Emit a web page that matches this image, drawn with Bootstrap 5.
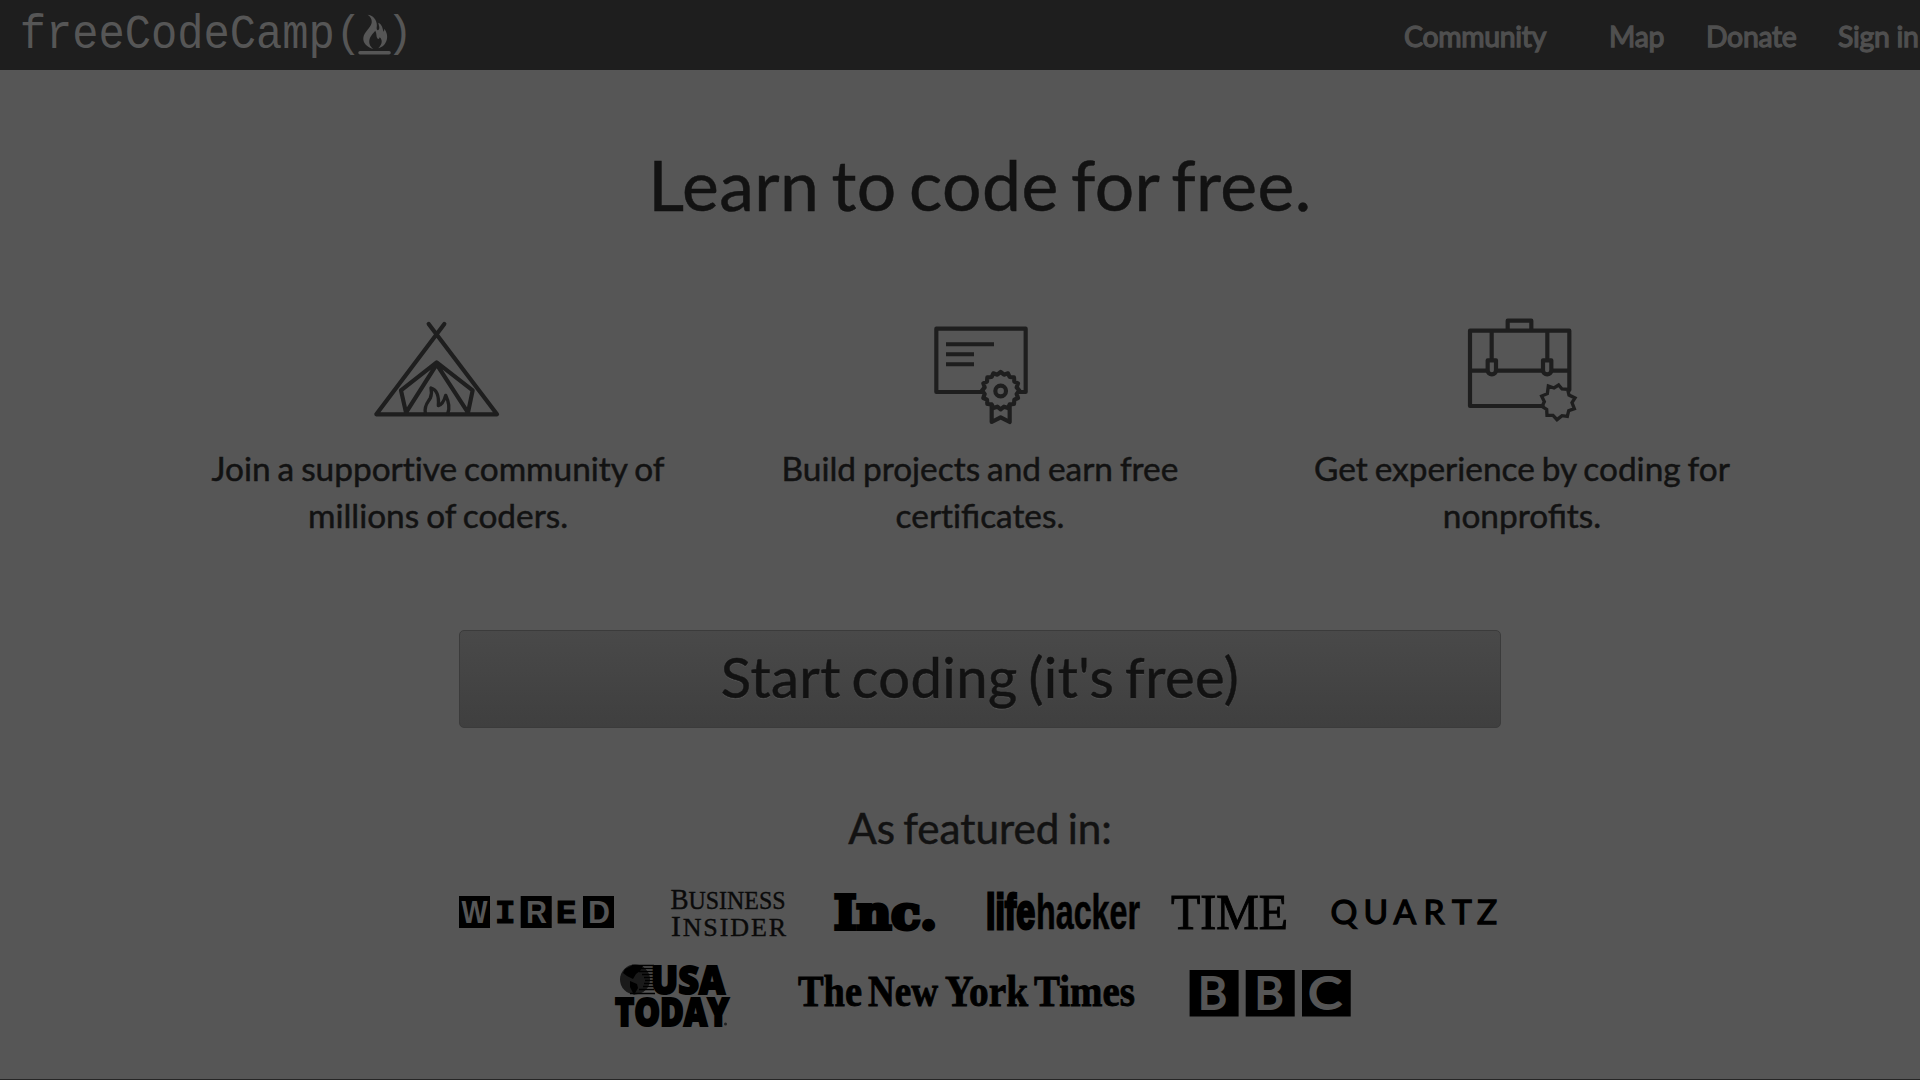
<!DOCTYPE html>
<html lang="en">
<head>
<meta charset="utf-8">
<title>freeCodeCamp</title>
<link href="https://cdn.jsdelivr.net/npm/bootstrap@5.3.0/dist/css/bootstrap.min.css" rel="stylesheet">
<style>
body{background:#565656;color:#121212;font-family:Lato,sans-serif;height:1080px;overflow:hidden;border-bottom:1px solid #262626}
.page{width:1960px;-webkit-text-stroke:.5px #121212}
.topbar{height:70px;background:#1e1e1e;width:1960px}
.topbar .nav-link{color:#4f4f4f;-webkit-text-stroke:1.3px #4f4f4f;font-size:28.4px;letter-spacing:-.3px;line-height:34px;padding:0;white-space:nowrap;flex:none}
.topbar .nav-link:hover{color:#777}
.brand-mark{width:420px;height:70px}
.menu{margin-left:984px;padding-top:1px}
.item-community{width:205px}.item-map{width:97px}.item-donate{width:132px}
h1{font-size:69.7px;line-height:76px;margin:76px 0 88px;font-weight:400;word-spacing:-6px;letter-spacing:.42px}
.features{width:1626px}
.features p{font-size:33.4px;line-height:47px;margin:15px 0 0;word-spacing:-1.6px}
.features svg{height:120px}
.start-btn{width:1042px;height:98px;margin-top:91px;padding:0 0 3px;font-size:56.2px;line-height:1;color:#121212;border:1px solid #3b3b3b;border-radius:5px;background:linear-gradient(#494949,#3f3f3f);text-shadow:0 1px 1px #5a5a5a;word-spacing:-4px;letter-spacing:.4px}
h2{font-size:42.2px;line-height:46px;margin:77px 0 34px;font-weight:400;word-spacing:-2.5px}
.press{width:1042px}
svg{display:block;flex:none;-webkit-text-stroke:0}
.press svg{overflow:visible}
.ink{fill:none;stroke:#1e1e1e;stroke-width:12.5;stroke-linejoin:round;stroke-linecap:round}
</style>
<script src="https://cdn.jsdelivr.net/npm/bootstrap@5.3.0/dist/js/bootstrap.bundle.min.js"></script>
</head>
<body>
<nav class="topbar d-flex align-items-center">
  <a href="#" class="brand-mark d-block" aria-label="freeCodeCamp">
    <svg width="420" height="70" viewBox="0 0 420 70" fill="#565656">
      <g font-family="Liberation Mono,monospace" font-size="43.8">
        <text transform="translate(19.8 47.5) scale(1 1.1)" textLength="315">freeCodeCamp</text>
        <text transform="translate(335.5 45.8) scale(1 1.03)">(</text>
        <text transform="translate(386.500 45.8) scale(1 1.03)">)</text>
      </g>
      <path transform="scale(.3333)" d="M1103 44C1124 46 1134 66 1130 84C1130 94 1139 92 1138 82L1135 68C1148 74 1147 86 1151 95C1153 92 1153 89 1152 86C1162 96 1164 112 1159 124C1154 136 1146 142 1135 145C1149 131 1147 118 1139 112C1138 117 1135 118 1132 115C1128 109 1131 101 1126 92C1120 99 1110 108 1108 122C1107 134 1113 141 1120 147C1101 141 1089 130 1090 114C1092 95 1111 86 1115 69C1117 58 1111 49 1103 44Z"/>
      <rect x="358.300" y="51" width="32.500" height="3.500" rx="1.700"/>
    </svg>
  </a>
  <div class="menu d-flex">
    <a class="nav-link item-community" href="#">Community</a>
    <a class="nav-link item-map" href="#">Map</a>
    <a class="nav-link item-donate" href="#">Donate</a>
    <a class="nav-link" href="#">Sign in</a>
  </div>
</nav>
<main class="page d-flex flex-column align-items-center text-center">
  <h1>Learn to code for free.</h1>
  <div class="features row g-0">
    <div class="col-4">
      <svg class="mx-auto" width="154" viewBox="2 0 462 360"><g class="ink"><path d="M205 42L410 313H48L252 42M229 157L122 241L137 308L229 163L323 308L337 241Z"/><path d="M195 311C190 285 204 276 210 264C215 252 214 243 212 234C232 240 236 262 234 287C243 285 252 270 256 256C265 275 269 296 262 311" stroke-width="10"/></g></svg>
      <p>Join a support&zwnj;ive community of<br>millions of coders.</p>
    </div>
    <div class="col-4">
      <svg class="mx-auto" width="120" viewBox="0 0 360 360"><g class="ink"><path d="M189 246H49V56H317V246H298"/><path d="M78 103H222M78 133H162M78 163H162" stroke-linecap="butt" stroke-width="12"/><path d="M215 288V336L242 322L269 336V288"/><path transform="translate(242 242)" d="M0-56L10-48L22-52L27-41L40-40L41-27L52-22L48-10L56 0L48 10L52 22L41 27L40 40L27 41L22 52L10 48L0 56L-10 48L-22 52L-27 41L-40 40L-41 27L-52 22L-48 10L-56 0L-48-10L-52-22L-41-27L-40-40L-27-41L-22-52L-10-48Z"/><circle cx="242" cy="243" r="16"/></g></svg>
      <p>Build projects and earn free<br>cert&zwnj;ificates.</p>
    </div>
    <div class="col-4">
      <svg class="mx-auto" width="140" viewBox="6 15 420 360"><g class="ink"><path d="M278 303H60V77H358V255M60 197H110M143 197H276M308 197H358M173 77V47H244V77M125 77V160M292 77V160"/><path d="M113 166H138V196A12.500 12 0 0 1 113 196ZM279 166H304V196A12.500 12 0 0 1 279 196Z"/><path d="M326 240L336 252L353 253L357 270L375 279L366 293L373 311L356 317L352 334L336 332L321 344L309 331L291 331L290 313L276 304L283 290L275 273L292 266L295 243L312 249Z" stroke-linejoin="miter" stroke-width="10"/></g></svg>
      <p>Get experience by coding for<br>nonprofits.</p>
    </div>
  </div>
  <a class="btn start-btn d-flex align-items-center justify-content-center" href="#">Start coding (it's free)</a>
  <h2>As featured in:</h2>
  <div class="press d-flex">
    <svg width="184" height="60" viewBox="459 885 184 60" role="img"><path d="M459 896h31v32h-31zM520.700 896h31v32h-31zM583 896h31v32h-31z"/><g font-family="Liberation Sans,sans-serif" font-size="31" font-weight="700"><g fill="#565656"><text x="461.500" y="923" textLength="26" lengthAdjust="spacingAndGlyphs">W</text><text x="526" y="923" textLength="21" lengthAdjust="spacingAndGlyphs">R</text><text x="588" y="923" textLength="22" lengthAdjust="spacingAndGlyphs">D</text></g><g font-family="Liberation Mono,monospace" font-size="34" stroke="#000" stroke-width="1.200"><text x="495" y="923">I</text><text x="556" y="923">E</text></g></g></svg>
    <svg width="168" height="60" viewBox="643 885 168 60" font-family="Liberation Serif,serif" fill="#0a0a0a" stroke="#0a0a0a" stroke-width=".4"><text x="670.500" y="908.500" font-size="29.500" textLength="115" lengthAdjust="spacingAndGlyphs">B<tspan font-size="26">USINESS</tspan></text><text x="671" y="936" font-size="29.500" textLength="115" lengthAdjust="spacing">I<tspan font-size="26">NSIDER</tspan></text></svg>
    <svg width="151" height="60" viewBox="811 885 151 60" font-family="DejaVu Serif,serif" font-weight="700" font-size="46"><text x="834" y="928.500" textLength="103" lengthAdjust="spacingAndGlyphs" stroke="#000" stroke-width="4">Inc.</text></svg>
    <svg width="193" height="60" viewBox="962 885 193 60" font-family="Liberation Sans Narrow,Liberation Sans,sans-serif" font-weight="700" font-size="50"><text x="986" y="929" textLength="49" lengthAdjust="spacingAndGlyphs" stroke="#000" stroke-width="3">life</text><text x="1036" y="929" textLength="104" lengthAdjust="spacingAndGlyphs" stroke="#000" stroke-width=".6">hacker</text></svg>
    <svg width="155" height="60" viewBox="1155 885 155 60" font-family="Liberation Serif,serif" font-size="51"><text x="1171" y="929" textLength="117" lengthAdjust="spacingAndGlyphs" stroke="#000" stroke-width="1">TIME</text></svg>
    <svg width="191" height="60" viewBox="1310 885 191 60" font-family="Lato,sans-serif" font-size="33.500" stroke="#000" stroke-width="1.300"><text y="923.500" x="1330.500 1363.500 1393.500 1423.500 1452 1477">QUARTZ</text></svg>
  </div>
  <div class="press d-flex mt-3">
    <svg width="305" height="70" viewBox="459 961 305 70"><circle cx="635" cy="979.500" r="15" fill="#1a1a1a"/><path d="M625 969l8-4 10 1-3 5-4 3-3 5-6-3-4-3zM630 981l7 3 1 4-4 7-4-8z"/><path d="M632 965.500h22M635 968.500h19M639 971.500h15M642 974.500h12M644 977.500h10M645 980.500h9M644 983.500h10M643 986.500h11M639 989.500h15M630 993.500h25" stroke="#000" stroke-width="1.500"/><g font-family="Open Sans,Lato,sans-serif" font-weight="800" font-size="39" stroke="#000" stroke-width="2"><text x="651" y="993.500" textLength="74" lengthAdjust="spacingAndGlyphs">USA</text><text x="615" y="1025.500" textLength="114" lengthAdjust="spacingAndGlyphs">TODAY</text></g><circle cx="725.500" cy="1024" r="1.500" fill="#222"/></svg>
    <svg width="396" height="70" viewBox="764 961 396 70" font-family="Liberation Serif,serif" font-weight="700" font-size="44"><g stroke="#000" stroke-width=".9"><text x="798" y="1006" textLength="64" lengthAdjust="spacingAndGlyphs">The</text><text x="868" y="1006" textLength="70" lengthAdjust="spacingAndGlyphs">New</text><text x="945" y="1006" textLength="83" lengthAdjust="spacingAndGlyphs">York</text><text x="1034" y="1006" textLength="101" lengthAdjust="spacingAndGlyphs">Times</text></g></svg>
    <svg width="200" height="70" viewBox="1160 961 200 70"><path d="M1189.600 970h49v46.600h-49zM1245.700 970h49v46.600h-49zM1302 970h48.700v46.600h-48.700z"/><g fill="#565656" stroke="#565656" stroke-width="1.800" font-family="Lato,sans-serif" font-size="45"><text x="1198" y="1009">B</text><text x="1254.500" y="1009">B</text><text x="1308" y="1009" textLength="34" lengthAdjust="spacingAndGlyphs">C</text></g></svg>
  </div>
</main>
</body>
</html>
